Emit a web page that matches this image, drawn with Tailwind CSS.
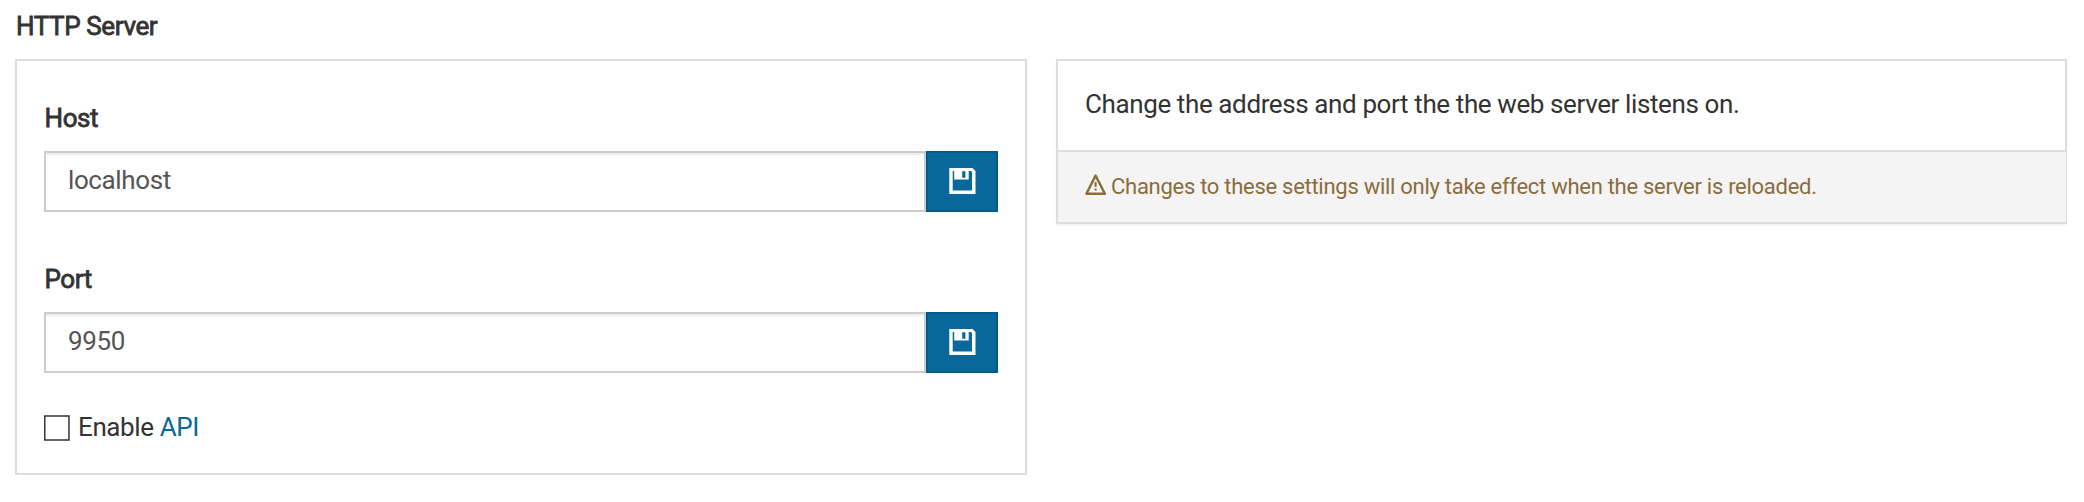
<!DOCTYPE html>
<html lang="en">
<head>
<meta charset="utf-8">
<title>HTTP Server</title>
<script src="https://cdn.jsdelivr.net/npm/@tailwindcss/browser@4"></script>
</head>
<body class="bg-white pl-[15px] pr-[17px] pt-2 font-[Roboto,sans-serif] text-[26px] leading-9 tracking-[-0.39px] text-[#333]">
<h2 class="mb-[15px] pl-px font-normal [-webkit-text-stroke:0.8px_#333]">HTTP Server</h2>
<main class="flex items-start gap-[29px]">
  <section class="h-[416px] w-[1012px] border-2 border-[#ddd] px-[27px] pt-[39px] shadow-[0_2px_2px_rgba(0,0,0,0.05)]">
    <label class="block pl-[0.5px] font-normal [-webkit-text-stroke:0.8px_#333]">Host</label>
    <div class="mt-[15px] flex h-[61px]">
      <div class="flex-1 border-2 border-[#ccc] px-[22px] pt-[9px] text-[#555] shadow-[inset_0_2px_2px_rgba(0,0,0,0.075)]">localhost</div>
      <button class="flex w-[72px] items-start justify-center border-2 border-[#055a87] bg-[#08689c] pt-[15px]">
        <svg class="h-[26px] w-[27px]" viewBox="0 0 27 26" fill="#fff" fill-rule="evenodd"><path d="M.3 0H23.5L26.5 3V26H.3ZM3.7 3V22.5H23V4L22 3H19.7V11.5H5.2V3ZM13.2 3.2V9.8H16.4V3.2Z"/></svg>
      </button>
    </div>
    <label class="mt-[49px] block pl-[0.5px] font-normal [-webkit-text-stroke:0.8px_#333]">Port</label>
    <div class="mt-[15px] flex h-[61px]">
      <div class="flex-1 border-2 border-[#ccc] px-[22px] pt-[9px] text-[#555] shadow-[inset_0_2px_2px_rgba(0,0,0,0.075)]">9950</div>
      <button class="flex w-[72px] items-start justify-center border-2 border-[#055a87] bg-[#08689c] pt-[15px]">
        <svg class="h-[26px] w-[27px]" viewBox="0 0 27 26" fill="#fff" fill-rule="evenodd"><path d="M.3 0H23.5L26.5 3V26H.3ZM3.7 3V22.5H23V4L22 3H19.7V11.5H5.2V3ZM13.2 3.2V9.8H16.4V3.2Z"/></svg>
      </button>
    </div>
    <div class="mt-9 flex">
      <svg class="mt-[6px] mr-2 h-[26px] w-[26px]" viewBox="0 0 26 26" fill="none" stroke="#333" stroke-width="1.5"><path d="M.75 .95H24.95V24.95H.75Z"/></svg>
      <span>Enable <a class="text-[#08689c]">API</a></span>
    </div>
  </section>
  <section class="w-[1011px] border-2 border-[#ddd] shadow-[0_2px_2px_rgba(0,0,0,0.05)]">
    <div class="h-[89px] px-[27px] pt-[25px]">Change the address and port the the web server listens on.</div>
    <div class="-mr-px flex h-[72px] border-t-2 border-[#ddd] bg-[#f4f4f4] px-[27px] pt-5 text-[22px] leading-[30px] tracking-[-0.28px] text-[#8a6d3b]">
      <svg class="mt-[2px] mr-1 h-[22px] w-[22px]" viewBox="0 0 22 22" fill="none" stroke="#8a6d3b" stroke-width="2.4"><path stroke-linejoin="round" d="M10.6 1.6 1.4 19.8H19.9Z"/><path stroke-width="2" d="M10.6 8V13M10.6 14.4V16.4"/></svg>
      <span>Changes to these settings will only take effect when the server is reloaded.</span>
    </div>
  </section>
</main>
</body>
</html>
